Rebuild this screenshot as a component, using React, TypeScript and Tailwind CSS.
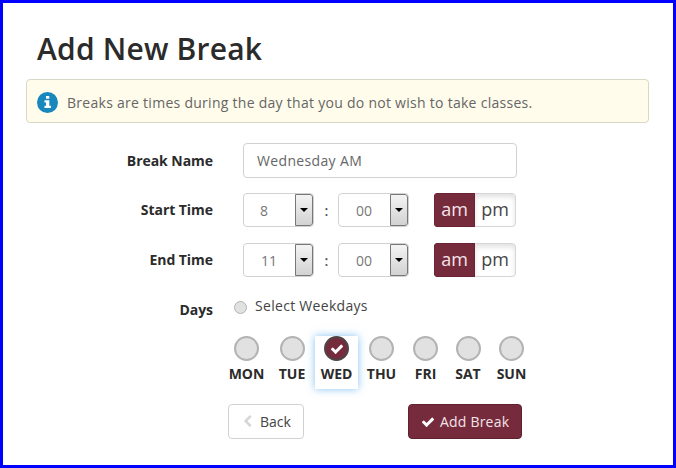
import { clsx } from 'clsx'

const DAYS = [
  { name: 'MON', width: 'w-[45px]' },
  { name: 'TUE', width: 'w-[46px]' },
  { name: 'WED', width: 'w-[43px]', checked: true },
  { name: 'THU', width: 'w-[47px]' },
  { name: 'FRI', width: 'w-[41px]' },
  { name: 'SAT', width: 'w-[44px]' },
  { name: 'SUN', width: 'w-[43px]' },
]

function CheckIcon({ className }: { className?: string }) {
  return (
    <svg viewBox="0 0 1792 1792" fill="currentColor" className={className}>
      <path d="M1671 566q0 40-28 68l-724 724-136 136q-28 28-68 28t-68-28l-136-136-362-362q-28-28-28-68t28-68l136-136q28-28 68-28t68 28l294 295 656-657q28-28 68-28t68 28l136 136q28 28 28 68z" />
    </svg>
  )
}

function ChevronIcon({ className }: { className?: string }) {
  return (
    <svg viewBox="0 0 1792 1792" fill="currentColor" className={className}>
      <path d="M1427 301l-531 531 531 531q19 19 19 45t-19 45l-166 166q-19 19-45 19t-45-19l-742-742q-19-19-19-45t19-45l742-742q19-19 45-19t45 19l166 166q19 19 19 45t-19 45z" />
    </svg>
  )
}

function InfoIcon({ className }: { className?: string }) {
  return (
    <svg viewBox="0 0 21 21" className={className}>
      <circle cx="10.5" cy="10.5" r="10.5" fill="#1787bd" />
      <path d="M9 4h3.3v2.7H9zM7.5 8.3h4.8v5.4h1.6V16H7.5v-2.3h1.6v-3.1H7.5z" fill="#fff" />
    </svg>
  )
}

function Label({ children }: { children: string }) {
  return <div className="w-[187px] shrink-0 text-right font-bold tracking-[-0.05px] text-[#2b2b2b]">{children}</div>
}

function Select({ value, pad }: { value: string; pad: string }) {
  return (
    <div className="flex h-[34px] w-[71px] overflow-hidden rounded-[4px] border border-[#d2d2d2] bg-white">
      <span className={clsx('flex-1 pt-[7px] text-[14px] leading-[20px] text-[#777]', pad)}>{value}</span>
      <span className="flex w-[18px] items-center justify-center rounded-r-[3px] border border-[#777] bg-linear-to-b from-[#f4f4f4] to-[#d2d2d2]">
        <svg viewBox="0 0 8 4" className="h-[4px] w-[8px]">
          <path d="M0 0h8L4 4z" fill="#000" />
        </svg>
      </span>
    </div>
  )
}

function TimeRow({ label, hour, pad }: { label: string; hour: string; pad: string }) {
  return (
    <div className="flex h-[34px] items-center">
      <Label>{label}</Label>
      <div className="ml-[30px] flex items-center">
        <Select value={hour} pad={pad} />
        <span className="w-[24px] pl-px pt-px text-center font-semibold text-[#555]">:</span>
        <Select value="00" pad="pl-[17px]" />
      </div>
      <div className="ml-[25px] flex h-[34px] w-[82px] overflow-hidden rounded-[4px] text-[18px] leading-[30px]">
        <span className="w-[41px] border border-[#6b2234] bg-[#762b3d] text-center text-[#f3e4e8]">am</span>
        <span className="flex-1 rounded-r-[4px] border border-l-0 border-[#d6d6d6] bg-white text-center text-[#444] shadow-[inset_0_3px_5px_rgba(0,0,0,0.12)]">
          pm
        </span>
      </div>
    </div>
  )
}

export default function App() {
  return (
    <div className="h-[468px] w-[676px] border-[3px] border-[#0000ff] bg-white pl-[23px] pt-[28px] font-['Open_Sans','Liberation_Sans',sans-serif] text-[14px] leading-[20px]">
      <h1 className="pl-[11px] text-[30px] font-semibold leading-[36px] tracking-[0.2px] text-[#2b2b2b]">
        Add New Break
      </h1>

      <div className="mt-[12px] flex h-[44px] w-[623px] items-center rounded-[4px] border border-[#d9d7c5] bg-[#fffceb] pl-[10px] pt-[3px] text-[#666]">
        <InfoIcon className="size-[21px]" />
        <span className="ml-[9px] tracking-[0.275px]">
          Breaks are times during the day that you do not wish to take classes.
        </span>
      </div>

      <div className="mt-[20px] flex flex-col gap-[16px]">
        <div className="flex h-[35px] items-center">
          <Label>Break Name</Label>
          <div className="ml-[30px] h-[35px] w-[274px] rounded-[4px] border border-[#d2d2d2] pl-[13px] pt-[7px] tracking-[0.35px] text-[#666]">
            Wednesday AM
          </div>
        </div>
        <div className="-mt-px flex flex-col gap-[16px]">
          <TimeRow label="Start Time" hour="8" pad="pl-[16px]" />
          <TimeRow label="End Time" hour="11" pad="pl-[17px]" />
        </div>
      </div>

      <div className="mt-[18px] flex h-[33px]">
        <div className="pt-[5px]">
          <Label>Days</Label>
        </div>
        <div className="ml-[21px] flex h-[22px] items-center gap-[8px] tracking-[0.3px] text-[#444]">
          <span className="mt-[2px] size-[13px] rounded-full border border-[#b3b3b3] bg-[#e1e1e1]" />
          Select Weekdays
        </div>
      </div>

      <div className="ml-[198px] mt-[8px] flex">
        {DAYS.map((day) => (
          <div
            key={day.name}
            className={clsx(
              'flex h-[53px] flex-col items-center',
              day.width,
              day.checked && 'shadow-[0_0_8px_rgba(82,168,236,0.7)]',
            )}
          >
            <span
              className={clsx(
                'flex size-[25px] items-center justify-center rounded-full border-2',
                day.checked ? 'border-[#4e4448] bg-[#762b3d] text-white' : 'border-[#b3b3b3] bg-[#e1e1e1]',
              )}
            >
              {day.checked && <CheckIcon className="size-[14px]" />}
            </span>
            <span className="mt-[3px] font-bold text-[#2b2b2b]">{day.name}</span>
          </div>
        ))}
      </div>

      <div className="ml-[202px] mt-[15px] flex w-[294px] justify-between">
        <button className="flex h-[35px] w-[76px] items-center rounded-[4px] border border-[#d2d2d2] bg-white pl-[12px] text-[#444]">
          <ChevronIcon className="mr-[6px] size-[13px] text-[#d6d6d6]" />
          Back
        </button>
        <button className="flex h-[35px] w-[114px] items-center rounded-[4px] border border-[#5f2030] bg-[#762b3d] pl-[12px] tracking-[0.2px] text-[#f3e4e8]">
          <CheckIcon className="mr-[5px] size-[14px] text-white" />
          Add Break
        </button>
      </div>
    </div>
  )
}
